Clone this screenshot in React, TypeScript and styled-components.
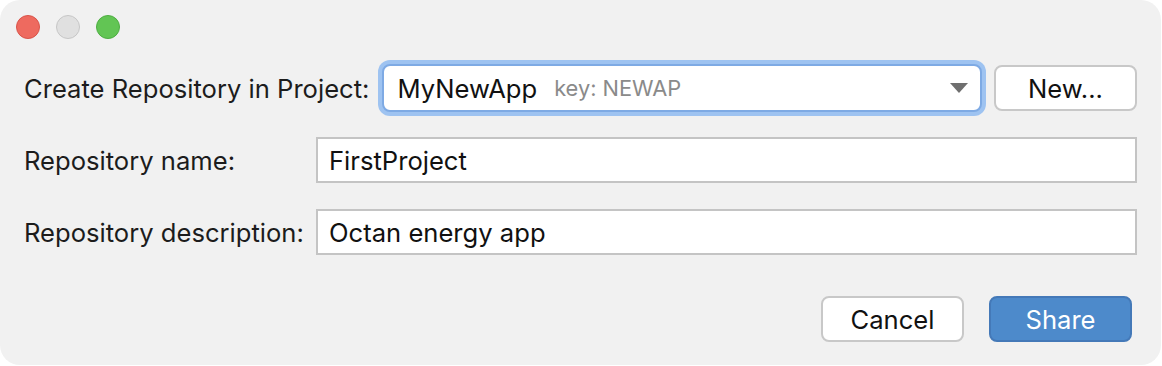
import React from "react";
import styled, { createGlobalStyle } from "styled-components";

const GlobalStyle = createGlobalStyle`
  html, body {
    margin: 0;
    padding: 0;
    background: #ffffff;
  }
  body {
    font-family: Inter, "Liberation Sans", sans-serif;
    -webkit-font-smoothing: antialiased;
  }
`;

const Window = styled.div`
  width: 1161px;
  height: 365px;
  box-sizing: border-box;
  background: #f1f1f1;
  border-radius: 20px;
  display: flex;
  flex-direction: column;
  overflow: hidden;
`;

const TitleBar = styled.div`
  height: 54px;
  display: flex;
  align-items: center;
  gap: 16px;
  padding-left: 16px;
`;

const Light = styled.span<{ $fill: string; $edge: string }>`
  width: 24px;
  height: 24px;
  box-sizing: border-box;
  border-radius: 50%;
  background: ${(p) => p.$fill};
  border: 1px solid ${(p) => p.$edge};
`;

const Body = styled.div`
  display: flex;
  flex-direction: column;
  padding: 6px 24px 0 24px;
`;

const Label = styled.label`
  font-size: 25.6px;
  color: #1c1c1c;
  white-space: nowrap;
`;

const ProjectRow = styled.div`
  height: 56px;
  display: flex;
  align-items: center;
`;

const Combo = styled.div`
  flex: 1;
  margin-left: 13px;
  height: 48px;
  box-sizing: border-box;
  background: #fff;
  border: 2px solid #7eaae4;
  border-radius: 8px;
  box-shadow: 0 0 0 4px #9ec3f1;
  display: flex;
  align-items: center;
  padding: 0 12px 0 13px;
`;

const ComboValue = styled.span`
  font-size: 25.6px;
  color: #111;
`;

const ComboHint = styled.span`
  margin-left: 17px;
  font-size: 21.8px;
  color: #8a8a8a;
  flex: 1;
`;

const Caret = styled.svg`
  width: 18px;
  height: 10px;
`;

const PushButton = styled.button<{ $primary?: boolean }>`
  width: 143px;
  height: 46px;
  box-sizing: border-box;
  border-radius: 8px;
  font-family: inherit;
  font-size: 25.6px;
  padding: 0;
  background: ${(p) => (p.$primary ? "#4d8acb" : "#ffffff")};
  color: ${(p) => (p.$primary ? "#ffffff" : "#111111")};
  border: 2px solid ${(p) => (p.$primary ? "#4479b8" : "#c8c8c8")};
`;

const NewButton = styled(PushButton)`
  margin-left: 12px;
`;

const Fields = styled.div`
  margin-top: 21px;
  display: grid;
  grid-template-columns: 292px 1fr;
  row-gap: 26px;
  align-items: center;
`;

const TextField = styled.input`
  height: 46px;
  box-sizing: border-box;
  border: 2px solid #c4c4c4;
  background: #fff;
  font-family: inherit;
  font-size: 25.6px;
  color: #111;
  padding: 0 11px;
  outline: none;
`;

const Actions = styled.div`
  margin-top: 41px;
  display: flex;
  justify-content: flex-end;
  gap: 25px;
  padding-right: 5px;
`;

export default function App() {
  return (
    <>
      <GlobalStyle />
      <Window>
        <TitleBar>
          <Light $fill="#ee6a5f" $edge="#d8544a" />
          <Light $fill="#e0e0e0" $edge="#c6c6c6" />
          <Light $fill="#62c554" $edge="#4ead42" />
        </TitleBar>
        <Body>
          <ProjectRow>
            <Label>Create Repository in Project:</Label>
            <Combo>
              <ComboValue>MyNewApp</ComboValue>
              <ComboHint>key: NEWAP</ComboHint>
              <Caret viewBox="0 0 18 10">
                <path d="M0 0 H18 L9 10 Z" fill="#6f6f6f" />
              </Caret>
            </Combo>
            <NewButton>New...</NewButton>
          </ProjectRow>
          <Fields>
            <Label>Repository name:</Label>
            <TextField defaultValue="FirstProject" />
            <Label>Repository description:</Label>
            <TextField defaultValue="Octan energy app" />
          </Fields>
          <Actions>
            <PushButton>Cancel</PushButton>
            <PushButton $primary>Share</PushButton>
          </Actions>
        </Body>
      </Window>
    </>
  );
}
